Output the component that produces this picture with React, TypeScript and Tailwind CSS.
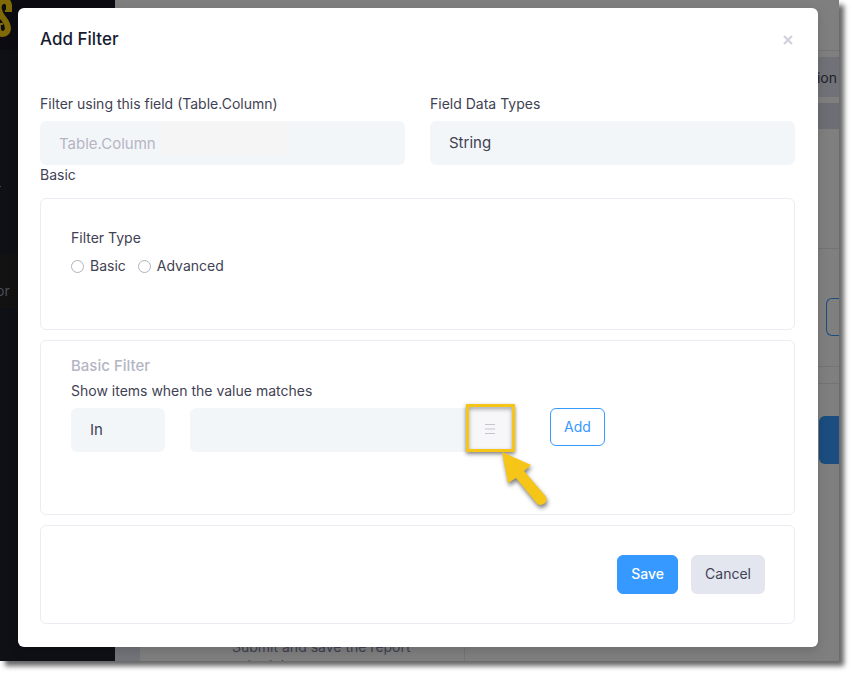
import type { ButtonHTMLAttributes, ReactNode, SelectHTMLAttributes } from 'react';

function Panel({ className = '', children }: { className?: string; children: ReactNode }) {
  return (
    <section className={`rounded-md border border-[#ebedf3] pr-[29px] pl-[30px] ${className}`}>
      {children}
    </section>
  );
}

function Button({
  variant,
  className = '',
  ...props
}: ButtonHTMLAttributes<HTMLButtonElement> & { variant: 'primary' | 'secondary' | 'outline' }) {
  const styles = {
    primary: 'border-[#3699ff] bg-[#3699ff] font-medium text-white',
    secondary: 'border-[#e4e6ef] bg-[#e4e6ef] text-[#3f4254]',
    outline: 'border-[#3699ff] bg-white text-[#3699ff]',
  };
  return (
    <button
      type="button"
      className={`rounded-md border px-[13px] pb-0.5 text-[14px] whitespace-nowrap ${styles[variant]} ${className}`}
      {...props}
    />
  );
}

function Select({ className = '', ...props }: SelectHTMLAttributes<HTMLSelectElement>) {
  return (
    <select
      className={`h-11 appearance-none rounded-md bg-[#f3f6f9] px-[19px] text-[15px] text-[#3f4254] ${className}`}
      {...props}
    />
  );
}

function Radio({ id, label }: { id: string; label: string }) {
  return (
    <div className="flex items-center gap-1.5">
      <input
        type="radio"
        name="filter-type"
        id={id}
        className="size-[13px] appearance-none rounded-full border border-[#b0b2bd] bg-white checked:border-4 checked:border-[#3699ff]"
      />
      <label htmlFor={id} className="text-[14px] leading-5">
        {label}
      </label>
    </div>
  );
}

// The dimmed page behind the dialog
function Backdrop() {
  return (
    <div className="col-start-1 row-start-1 flex overflow-hidden bg-[#7f7f7f]" aria-hidden="true">
      <div className="w-[115px] shrink-0 overflow-hidden bg-[#0f1015] text-[14px] text-[#4c4e59]">
        <div className="flex h-[50px] bg-[#0d0b12]">
          <svg viewBox="0 0 14 40" className="h-10 w-3.5" fill="none" stroke="#806a08" strokeWidth="6">
            <path d="M9 11V5Q8 0 3 1Q-3 3 -1 10Q0 15 4 19Q8 24 8 29Q7 34 2 34Q-3 33 -2 24" />
            <path d="M5 11H12M-3 24H3" strokeWidth="2" />
          </svg>
        </div>
        <div className="flex h-[203px] items-end pb-[66px]">
          <span className="h-px w-px bg-[#6b4030]" />
        </div>
        <div className="flex h-[55px] items-center bg-[#121212] pt-[21px]">
          <span className="-ml-1 leading-[34px]">or</span>
        </div>
      </div>
      <div className="flex min-w-0 flex-1 flex-col">
        <div className="h-[51px] shrink-0 border-b border-[#747474]" />
        <div className="flex min-h-0 flex-1">
          <div className="w-[25px] bg-[#727479]" />
          <div className="flex min-w-0 flex-1 flex-col">
            <div className="mt-1.5 flex h-10 items-center justify-end bg-[#717278] pr-0.5 text-[14px] text-[#20212a]">
              Description
            </div>
            <div className="mt-1.5 h-[26px] bg-[#6d6e74]" />
            <div className="h-[120px] border-b border-[#747474]" />
            <div className="mt-[49px] flex h-[69px] justify-end border-b border-[#747474]">
              <div className="h-[38px] w-[13px] rounded-l-md border border-r-0 border-[#1b4d80]" />
            </div>
            <div className="h-[17px] border-b border-[#747474]" />
            <div className="flex justify-end pt-8">
              <div className="h-12 w-5 rounded-l-md bg-[#1b4d80]" />
            </div>
            <div className="flex flex-1 items-end">
              <div className="h-[197px] w-[325px] border-r border-[#747474] pt-[173px] pl-[92px]">
                <p className="text-[14px] leading-[19px] text-[#3f4254]">
                  Submit and save the report
                  <br />
                  schedule
                </p>
              </div>
            </div>
          </div>
        </div>
      </div>
    </div>
  );
}

function Pointer() {
  return (
    <svg
      viewBox="0 0 60 68"
      className="pointer-events-none absolute top-[39px] left-[30px] h-[68px] w-[60px] drop-shadow-[1px_3px_2px_rgba(0,0,0,0.5)]"
      fill="#f5c518"
      aria-hidden="true"
    >
      <path d="M6 5 35 18 28 24 49.500 49Q52 53 49 56Q44 60 40.500 56L20 31 12 36Z" />
    </svg>
  );
}

export default function App() {
  return (
    <div className="min-h-screen bg-white pr-[15px] pb-[15px] font-['Inter',sans-serif]">
      <div className="grid shadow-[5px_5px_5px_rgba(0,0,0,0.6)]">
        <Backdrop />
        <div
          role="dialog"
          aria-labelledby="dialog-title"
          className="z-10 col-start-1 row-start-1 mt-2 mr-[21px] mb-3.5 ml-[18px] rounded-md bg-white pr-[23px] pb-[23px] pl-[22px] text-[#3f4254] shadow-[0_4px_12px_rgba(0,0,0,0.15)]"
        >
          <header className="flex h-16 items-center justify-between">
            <h1 id="dialog-title" className="text-[17px] font-medium text-[#181c32]">
              Add Filter
            </h1>
            <button type="button" aria-label="Close" className="mr-0.5 text-[#d1d2da]">
              <svg viewBox="0 0 10 10" className="size-2.5" stroke="currentColor" strokeWidth="2.2">
                <path d="M1 1 9 9M9 1 1 9" />
              </svg>
            </button>
          </header>

          <div className="grid grid-cols-2 gap-x-[25px] pt-[22px]">
            <div>
              <label htmlFor="field" className="block h-[27px] text-[14px] leading-5">
                Filter using this field (Table.Column)
              </label>
              <div className="relative">
                <input
                  id="field"
                  placeholder="Table.Column"
                  className="block h-11 w-full rounded-md bg-[#f3f6f9] px-[19px] text-[15px] placeholder:text-[#b5b5c3]"
                />
                <span className="pointer-events-none absolute top-0 left-[121px] h-[33px] w-32 bg-[#f5f5f5]" />
              </div>
            </div>
            <div>
              <label htmlFor="data-type" className="block h-[27px] text-[14px] leading-5">
                Field Data Types
              </label>
              <Select id="data-type" className="block w-full">
                <option>String</option>
              </Select>
            </div>
          </div>
          <p className="h-[33px] text-[14px] leading-5">Basic</p>

          <div className="flex flex-col gap-2.5">
            <Panel className="h-[132px] pt-[29px]">
              <fieldset>
                <legend className="text-[14px] leading-5">Filter Type</legend>
                <div className="flex gap-3 pt-2">
                  <Radio id="basic" label="Basic" />
                  <Radio id="advanced" label="Advanced" />
                </div>
              </fieldset>
            </Panel>

            <Panel className="h-[175px] pt-3.5">
              <h2 className="text-[15px] leading-[22px] font-medium text-[#b5b5c3]">Basic Filter</h2>
              <label htmlFor="operator" className="block pt-1 text-[14px] leading-5">
                Show items when the value matches
              </label>
              <div className="flex items-start pt-[7px]">
                <Select id="operator" className="w-[94px]">
                  <option>In</option>
                </Select>
                <div className="relative ml-[25px] flex">
                  <input
                    aria-label="Value"
                    className="h-11 w-[276px] rounded-l-md bg-[#f3f6f9] px-[19px] text-[15px]"
                  />
                  <div className="relative">
                    <button
                      type="button"
                      aria-label="Choose values"
                      className="flex h-11 w-12 items-center justify-center rounded-r-md bg-[#f7f7fa] pb-0.5 text-[#c4c6cf]"
                    >
                      <svg viewBox="0 0 10 10" className="size-2.5" stroke="currentColor">
                        <path d="M0 .5H10M0 5H10M0 9.500H10" />
                      </svg>
                    </button>
                    <span className="pointer-events-none absolute -top-1 left-0 h-12 w-[49px] border-3 border-[#f5c518] shadow-[0_2px_4px_rgba(0,0,0,0.5),inset_0_2px_4px_rgba(0,0,0,0.35)]" />
                    <Pointer />
                  </div>
                </div>
                <Button variant="outline" className="ml-9 h-[38px]">
                  Add
                </Button>
              </div>
            </Panel>

            <Panel className="flex h-[99px] items-start justify-end gap-[13px] pt-[29px]">
              <Button variant="primary" className="h-[39px]">
                Save
              </Button>
              <Button variant="secondary" className="h-[39px]">
                Cancel
              </Button>
            </Panel>
          </div>
        </div>
      </div>
    </div>
  );
}
